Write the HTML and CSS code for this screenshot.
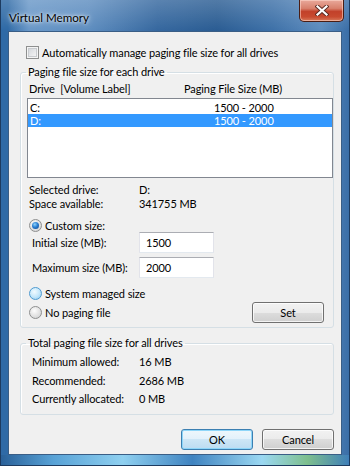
FILE: index.html
```html
<!DOCTYPE html>
<html>
<head>
<meta charset="utf-8">
<link rel="stylesheet" href="styles.css">
</head>
<body>
<div class="window">
  <div class="titlebar">
    <span class="title">Virtual Memory</span>
    <div class="close">
      <svg width="14" height="11" viewBox="0 0 14 11">
        <path d="M2.5 1.5 L11.5 9.5 M11.5 1.5 L2.5 9.5" stroke="#5a2a22" stroke-width="4" stroke-linecap="square" fill="none"/>
        <path d="M2.5 1.5 L11.5 9.5 M11.5 1.5 L2.5 9.5" stroke="#ffffff" stroke-width="2.2" stroke-linecap="square" fill="none"/>
      </svg>
    </div>
  </div>
  <div class="client">
    <div class="check-row">
      <span class="checkbox"></span>
      <span>Automatically manage paging file size for all drives</span>
    </div>

    <fieldset class="group group-drives">
      <legend>Paging file size for each drive</legend>
      <div class="list-head">
        <span>Drive&nbsp;&nbsp;[Volume Label]</span>
        <span>Paging File Size (MB)</span>
      </div>
      <div class="listbox">
        <div class="list-row"><span>C:</span><span>1500 - 2000</span></div>
        <div class="list-row selected"><span>D:</span><span>1500 - 2000</span></div>
      </div>
      <div class="info">
        <span>Selected drive:</span><span>D:</span>
        <span>Space available:</span><span>341755 MB</span>
      </div>
      <div class="radio-row custom">
        <span class="radio checked"></span><span>Custom size:</span>
      </div>
      <div class="field-row first">
        <span class="field-label">Initial size (MB):</span>
        <span class="textbox">1500</span>
      </div>
      <div class="field-row">
        <span class="field-label">Maximum size (MB):</span>
        <span class="textbox">2000</span>
      </div>
      <div class="radio-row system">
        <span class="radio hover"></span><span>System managed size</span>
      </div>
      <div class="radio-row nopaging">
        <span class="radio"></span><span>No paging file</span>
        <span class="button set">Set</span>
      </div>
    </fieldset>

    <fieldset class="group group-total">
      <legend>Total paging file size for all drives</legend>
      <div class="totals">
        <span>Minimum allowed:</span><span>16 MB</span>
        <span>Recommended:</span><span>2686 MB</span>
        <span>Currently allocated:</span><span>0 MB</span>
      </div>
    </fieldset>

    <div class="buttons">
      <span class="button default">OK</span>
      <span class="button">Cancel</span>
    </div>
  </div>
</div>
</body>
</html>
```

FILE: styles.css
```css
html, body {
  margin: 0;
  padding: 0;
  background: #2d5f94;
}
.window {
  width: 350px;
  height: 466px;
  box-sizing: border-box;
  padding: 0 7px 11px 7px;
  font-family: Lato, "Open Sans", sans-serif;
  font-size: 11px;
  letter-spacing: -0.1px;
  color: #000;
  background:
    linear-gradient(180deg, rgba(255,255,255,0.18) 0px, rgba(255,255,255,0) 30px),
    linear-gradient(90deg, #2f6aa6 0%, #2f6aa6 2%, #3c74ad 3%, #6a98c8 8%, #5f8ec0 25%, #36689f 45%, #2b5d93 62%, #3e71a8 78%, #5d8cbe 92%, #3a6ea7 100%);
  border: 1px solid #1d3b60;
  border-top: none;
}
.window::after {
  content: "";
  display: block;
  height: 10px;
  margin: 0 -7px;
  background: linear-gradient(90deg, #2a6199 0%, #58a2d6 15%, #8fd0f0 35%, #3f83c0 55%, #9bd8f2 75%, #7ebf8e 88%, #3f7fb8 100%);
}
.titlebar {
  height: 31px;
  display: flex;
  align-items: flex-start;
  justify-content: space-between;
}
.title {
  margin-left: 1px;
  margin-top: 10px;
  line-height: 16px;
  font-size: 11.6px;
  letter-spacing: 0;
  color: #000;
  text-shadow: 0 0 6px rgba(255,255,255,0.9), 0 0 3px rgba(255,255,255,0.9);
}
.close {
  width: 45px;
  height: 22px;
  margin-right: -2px;
  box-sizing: border-box;
  border: 1px solid #4a1d14;
  border-top: none;
  border-radius: 0 0 5px 5px;
  background: linear-gradient(180deg, #e9a99b 0%, #d8806c 40%, #c2412a 55%, #c84a2f 80%, #d77b5c 100%);
  box-shadow: inset 0 0 0 1px rgba(255,220,210,0.55);
  display: flex;
  align-items: center;
  justify-content: center;
}
.client {
  height: 424px;
  box-sizing: border-box;
  background: #f0f0f0;
  border: 1px solid #3a5e86;
  padding-top: 14px;
  display: flex;
  flex-direction: column;
}
.check-row {
  display: flex;
  align-items: center;
  height: 13px;
  line-height: 13px;
  margin-left: 17px;
  gap: 3px;
}
.checkbox {
  width: 13px;
  height: 13px;
  box-sizing: border-box;
  border: 1px solid #8e8f8f;
  background: linear-gradient(135deg, #cdd1d6 0%, #e9eaec 60%, #f8f8f8 100%);
  box-shadow: inset 0 0 0 1px #f4f4f4, inset 0 0 0 2px #c8cbcf;
}
.group {
  margin: 6px 7px 0 11px;
  padding: 0 0 4px 5px;
  border: 1px solid #d5dfe5;
  border-radius: 3px;
  box-shadow: inset 1px 1px 0 #ffffff;
  min-width: 0;
}
.group legend {
  padding: 0 2px;
  line-height: 14px;
  height: 14px;
}
.list-head {
  margin: 3px 0 0 3px;
  height: 14px;
  line-height: 14px;
  display: grid;
  grid-template-columns: 155px auto;
}
.listbox {
  margin: 2px 0 0 1px;
  height: 80px;
  box-sizing: border-box;
  border: 1px solid #828790;
  background: #fff;
  padding-top: 2px;
}
.list-row {
  height: 13px;
  line-height: 13px;
  padding-left: 2px;
  display: grid;
  grid-template-columns: 184px auto;
}
.list-row.selected {
  background: #3399ff;
  color: #fff;
}
.info {
  margin: 5px 0 0 3px;
  display: grid;
  grid-template-columns: 110px auto;
  line-height: 14px;
}
.radio-row {
  display: flex;
  align-items: center;
  gap: 3px;
  margin-left: 3px;
  height: 13px;
  line-height: 13px;
}
.radio-row.custom { margin-top: 8px; }
.radio-row.system { margin-top: 9px; }
.radio-row.nopaging { margin-top: 2px; height: 21px; }
.radio {
  width: 13px;
  height: 13px;
  box-sizing: border-box;
  border-radius: 50%;
  border: 1px solid #8e8f8f;
  background: radial-gradient(circle at 40% 35%, #fdfdfd 0%, #e6e6e6 45%, #c9cbcd 100%);
  position: relative;
}
.radio.checked::after {
  content: "";
  position: absolute;
  left: 2px;
  top: 2px;
  width: 7px;
  height: 7px;
  border-radius: 50%;
  background: radial-gradient(circle at 40% 35%, #8fd3fb 0%, #2a7fd2 45%, #0b3f86 100%);
}
.radio.hover {
  border-color: #4f9bd0;
  background: radial-gradient(circle at 40% 35%, #f2fbff 0%, #c6e8fb 50%, #8bc9ef 100%);
}
.field-row {
  display: flex;
  align-items: center;
  height: 21px;
  margin-left: 6px;
}
.field-row + .field-row { margin-top: 4px; }
.field-label {
  width: 107px;
}
.textbox {
  width: 75px;
  height: 21px;
  box-sizing: border-box;
  background: #fff;
  border: 1px solid #e2e3ea;
  border-top-color: #abadb3;
  border-bottom-color: #e3e9ef;
  padding-left: 6px;
  line-height: 19px;
}
.button {
  width: 72px;
  height: 21px;
  box-sizing: border-box;
  border: 1px solid #707070;
  border-radius: 3px;
  background: linear-gradient(180deg, #f2f2f2 0%, #ebebeb 50%, #dddddd 50%, #cfcfcf 100%);
  box-shadow: inset 0 0 0 1px rgba(255,255,255,0.75);
  text-align: center;
  line-height: 19px;
}
.button.set {
  margin-left: auto;
  margin-right: 9px;
}
.totals {
  margin: 3px 0 0 6px;
  display: grid;
  grid-template-columns: 107px auto;
  line-height: 18.5px;
}
.group-total {
  margin-top: 8px;
  padding-bottom: 5px;
}
.buttons {
  display: flex;
  justify-content: flex-end;
  gap: 9px;
  margin: 14px 7px 0 0;
}
.button.default {
  border-color: #3c7fb1;
  background: linear-gradient(180deg, #eef7fc 0%, #e2f1fb 50%, #cde6f6 50%, #bcdcf2 100%);
  box-shadow: inset 0 0 0 1px #8ed6f9;
}
```
